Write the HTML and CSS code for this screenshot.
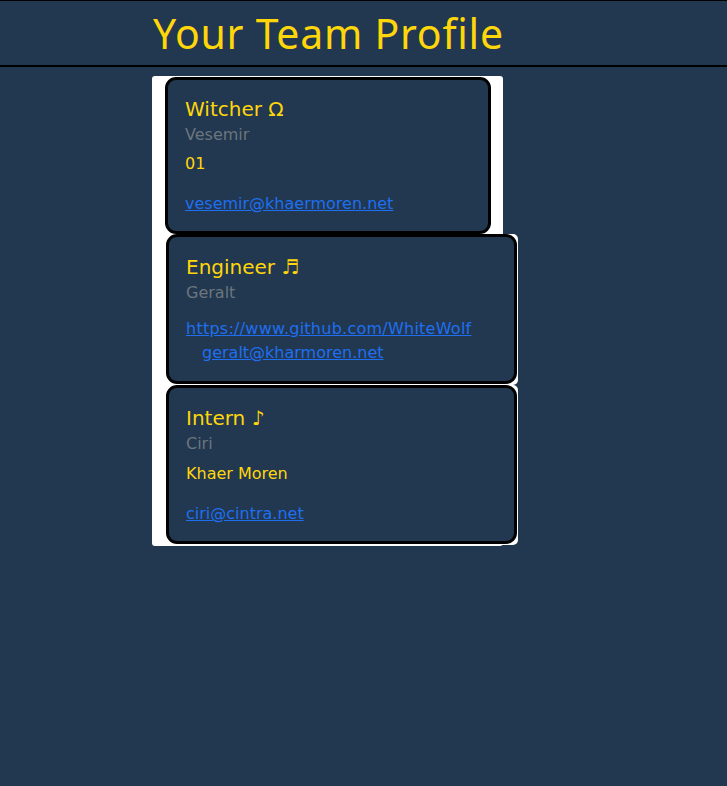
FILE: index.html
```html
<!DOCTYPE html>
<html lang="en">
<head>
<meta charset="utf-8">
<title>Your Team Profile</title>
<link rel="stylesheet" href="styles.css">
</head>
<body>
<header class="topbar">
  <h1 class="title">Your Team Profile</h1>
</header>
<main class="page">
  <section class="column">
    <article class="card card-witcher">
      <h2 class="role">Witcher &#937;</h2>
      <h3 class="name">Vesemir</h3>
      <p class="detail">01</p>
      <p class="mail"><a href="#">vesemir@khaermoren.net</a></p>
    </article>
    <div class="card-wrap">
      <article class="card card-wide card-engineer">
        <h2 class="role">Engineer &#9836;</h2>
        <h3 class="name">Geralt</h3>
        <p class="links"><a class="gh" href="#">https://www.github.com/WhiteWolf</a> <a class="indent" href="#">geralt@kharmoren.net</a></p>
      </article>
    </div>
    <div class="card-wrap">
      <article class="card card-wide card-intern">
        <h2 class="role">Intern &#9834;</h2>
        <h3 class="name">Ciri</h3>
        <p class="detail detail-school">Khaer Moren</p>
        <p class="mail"><a href="#">ciri@cintra.net</a></p>
      </article>
    </div>
  </section>
</main>
</body>
</html>
```

FILE: styles.css
```css
html, body {
  margin: 0;
  padding: 0;
  background: #213850;
  font-family: "DejaVu Sans", Verdana, sans-serif;
}

.topbar {
  border-top: 1px solid #000;
  border-bottom: 2px solid #000;
  height: 64px;
  box-sizing: content-box;
  padding-left: 153px;
}

.title {
  margin: 0;
  padding-top: 8px;
  font-family: "Noto Sans", "DejaVu Sans", sans-serif;
  font-weight: normal;
  font-size: 41px;
  letter-spacing: 0.75px;
  line-height: 48px;
  color: #ffd60a;
}

.page {
  padding: 9px 0 0 152px;
}

.column {
  width: 351px;
  background: #fff;
  border-radius: 3px;
  padding: 1px 0 1px 0;
}

.card {
  box-sizing: border-box;
  background: #213850;
  border: 3px solid #000;
  border-radius: 11px;
  padding: 17px 16px 15px 17px;
}

.card-witcher {
  margin-left: 13px;
  width: 326px;
}

.card-wrap {
  margin-left: 14px;
  width: 352px;
  background: #fff;
  border-radius: 5px;
  padding: 0 0 1px 0;
}

.card-wide {
  width: 351px;
}

.card-engineer {
  padding-top: 18px;
  padding-bottom: 16px;
}

.card-intern {
  padding-top: 18px;
  padding-bottom: 15px;
}

.role {
  margin: 0;
  font-size: 20px;
  line-height: 24px;
  font-weight: normal;
  color: #ffd60a;
}

.name {
  margin: 2px 0 0;
  font-size: 16px;
  line-height: 24px;
  font-weight: normal;
  color: #6c757d;
}

.detail {
  margin: 5px 0 0;
  font-size: 16px;
  line-height: 24px;
  color: #ffd60a;
}

.detail-school {
  margin-top: 6px;
}

.mail {
  margin: 16px 0 0;
  font-size: 16px;
  line-height: 24px;
}

.links {
  margin: 12px 0 0;
  font-size: 16px;
  line-height: 24px;
}

.gh {
  letter-spacing: 0.25px;
}

.indent {
  display: inline-block;
  margin-left: 16px;
}

a {
  color: #1f6ff0;
  text-decoration: underline;
}
```
